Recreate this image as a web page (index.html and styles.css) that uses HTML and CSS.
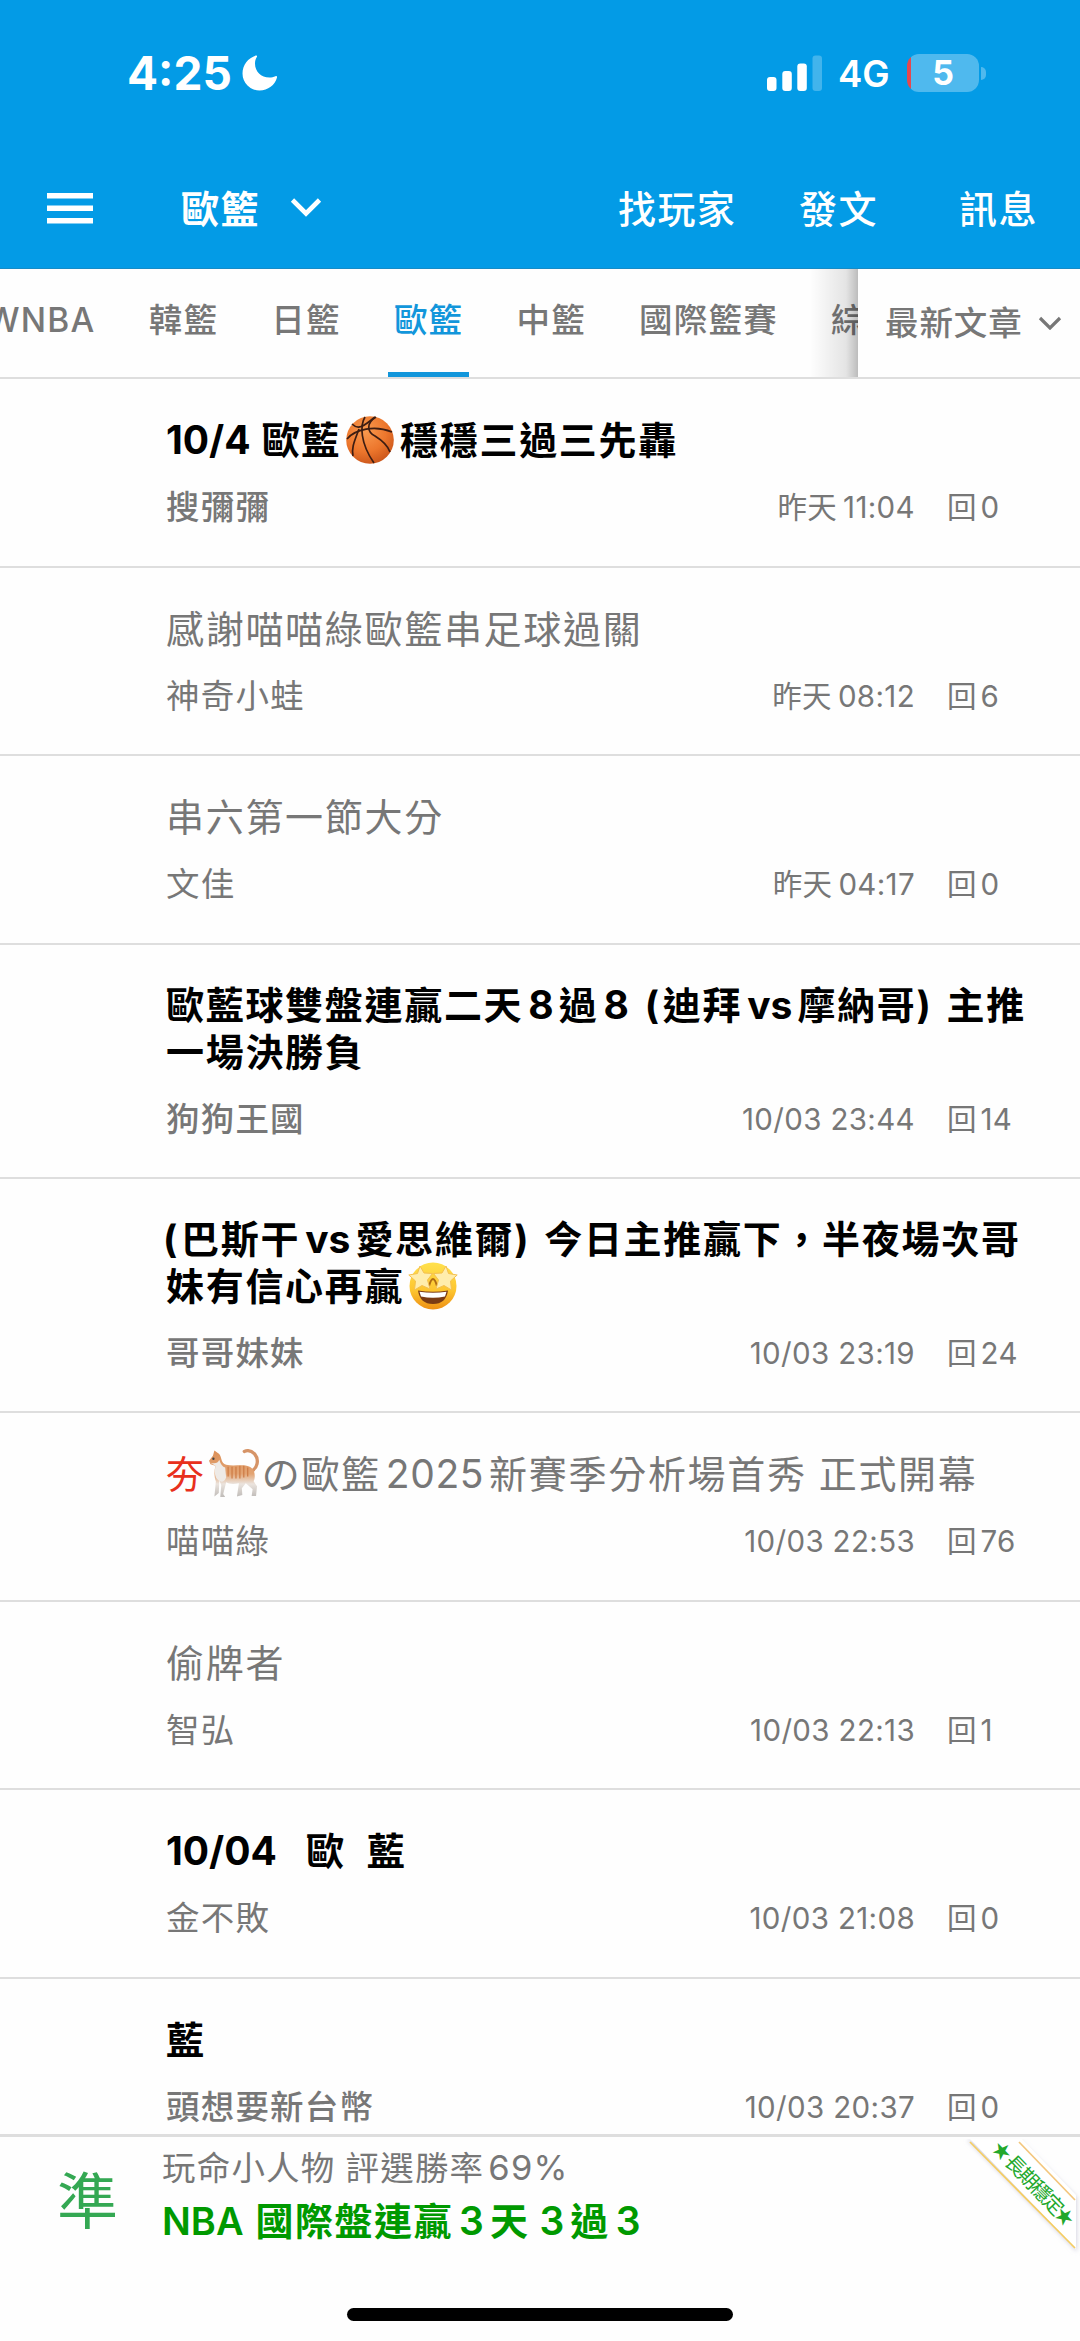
FILE: index.html
```html
<!DOCTYPE html>
<html lang="zh-Hant">
<head>
<meta charset="utf-8">
<title>歐籃</title>
<link rel="stylesheet" href="styles.css">
</head>
<body>
<div class="app">
  <header class="header">
    <div class="status">
      <span class="clock">4:25</span>
      <svg class="moon" width="36" height="36" viewBox="0 0 36 36"><path d="M14 0.5C6 3 0.5 10 0.5 18.500A17 17 0 0 0 17.500 35.500C26 35.500 33 30 35 22.500C35.300 21.300 34.500 20.800 33.500 21.300C31.500 22.200 29.500 22.500 27.500 22.500C19 22.500 13 16.500 13 8.500C13 6 13.600 4 14.800 2C15.400 1 15 0.200 14 0.500Z" fill="#fff"/></svg>
      <svg class="signal" width="56" height="36" viewBox="0 0 56 36" fill="#fff"><rect x="0" y="22" width="9.500" height="14" rx="3"/><rect x="15.300" y="16" width="9.500" height="20" rx="3"/><rect x="30.300" y="8.500" width="9.500" height="27.500" rx="3"/><rect x="45.500" y="0.500" width="9.500" height="35.500" rx="3" opacity=".25"/></svg>
      <span class="network">4G</span>
      <span class="battery">5</span>
      <span class="nub"></span>
    </div>
    <nav class="bar">
      <svg class="menu" width="46" height="32" viewBox="0 0 46 32" fill="#fff"><path d="M0 1h46v5.500H0zM0 13.500h46V19H0zM0 26h46v5.500H0z"/></svg>
      <span class="board">歐籃</span>
      <svg class="board-arrow" width="32" height="22" viewBox="0 0 32 22" fill="none" stroke="#fff" stroke-width="4.600"><path d="M2.500 3L16 16.500L29.500 3"/></svg>
      <span class="action players">找玩家</span>
      <span class="action compose">發文</span>
      <span class="action inbox">訊息</span>
    </nav>
  </header>
  <div class="tabs-row">
    <div class="tabs">
      <span class="tab">WNBA</span>
      <span class="tab">韓籃</span>
      <span class="tab">日籃</span>
      <span class="tab active">歐籃</span>
      <span class="tab">中籃</span>
      <span class="tab">國際籃賽</span>
      <span class="tab">綜</span>
    </div>
    <div class="sort">
      <span>最新文章</span>
      <svg width="24" height="14" viewBox="0 0 24 14" fill="none" stroke="#777" stroke-width="3.200"><path d="M2 2L12 12L22 2"/></svg>
    </div>
  </div>
  <main class="list">
    <article class="post">
      <h2 class="title bold"><span class="l date">10/4</span>歐藍<svg class="emoji" width="50" height="48" viewBox="0 0 50 48"><defs><radialGradient id="ball" cx=".4" cy=".3" r=".75"><stop offset="0" stop-color="#f99a4f"/><stop offset=".6" stop-color="#ec762c"/><stop offset="1" stop-color="#c9541a"/></radialGradient></defs><circle cx="25" cy="24" r="23.800" fill="url(#ball)"/><g fill="none" stroke="#3d1d12" stroke-width="1.700"><path d="M2 23C10 13 30 9 47 16"/><path d="M20 1C15 9 15 27 29 47"/><path d="M7 8C13 14 18 11 30 1"/><path d="M31 1C21 7 22 16 30 20C38 25 43 30 45 36"/><path d="M14 13C10 24 6 32 8 40"/></g></svg>穩穩三過三先轟</h2>
      <div class="meta"><span class="author medium">搜彌彌</span><span class="time"><span class="day">昨天</span>11:04</span><span class="replies">回<b>0</b></span></div>
    </article>
    <article class="post">
      <h2 class="title">感謝喵喵綠歐籃串足球過關</h2>
      <div class="meta"><span class="author">神奇小蛙</span><span class="time"><span class="day">昨天</span>08:12</span><span class="replies">回<b>6</b></span></div>
    </article>
    <article class="post">
      <h2 class="title">串六第一節大分</h2>
      <div class="meta"><span class="author">文佳</span><span class="time"><span class="day">昨天</span>04:17</span><span class="replies">回<b>0</b></span></div>
    </article>
    <article class="post tall">
      <h2 class="title bold">歐藍球雙盤連贏二天<span class="l">8</span>過<span class="l">8</span><span class="open">(</span>迪拜<span class="l">vs</span>摩納哥<span class="close">)</span>主推<br>一場決勝負</h2>
      <div class="meta"><span class="author medium">狗狗王國</span><span class="time">10/03 23:44</span><span class="replies">回<b>14</b></span></div>
    </article>
    <article class="post tall">
      <h2 class="title bold"><span class="open first">(</span>巴斯干<span class="l">vs</span>愛思維爾<span class="close">)</span>今日主推贏下，半夜場次哥<br>妹有信心再贏<svg class="emoji face" width="50" height="48" viewBox="0 0 50 48"><defs><linearGradient id="skin" x1="0" y1="0" x2="0" y2="1"><stop offset="0" stop-color="#ffe14d"/><stop offset=".6" stop-color="#fdc52f"/><stop offset="1" stop-color="#ed8f14"/></linearGradient></defs><circle cx="25" cy="24" r="23.500" fill="url(#skin)"/><path d="M10 28.500Q25 31 40 28.500Q38 42 25 42Q12 42 10 28.500Z" fill="#7a3b14"/><path d="M11.500 29.700Q25 32 38.500 29.700L37 34.500Q25 37 13 34.500Z" fill="#fff"/><path d="M21 24Q23 17 25 17Q27 17 29 24" fill="none" stroke="#b06c14" stroke-width="2"/><g fill="#ffedac" stroke="#f4c04f" stroke-width="1" stroke-linejoin="round"><path d="M12 4L16 11L24.500 11.500L19.500 18L22 27L14 23.500L6.500 28L7.500 19L0.800 13L9.500 11.500Z"/><path d="M38 4L34 11L25.500 11.500L30.500 18L28 27L36 23.500L43.500 28L42.500 19L49.200 13L40.500 11.500Z"/></g></svg></h2>
      <div class="meta"><span class="author medium">哥哥妹妹</span><span class="time">10/03 23:19</span><span class="replies">回<b>24</b></span></div>
    </article>
    <article class="post">
      <h2 class="title"><span class="red">夯</span><svg class="emoji cat" width="52" height="50" viewBox="0 0 52 50"><defs><linearGradient id="fur" x1="0" y1="0" x2="0" y2="1"><stop offset="0" stop-color="#dc9058"/><stop offset=".5" stop-color="#e3a473"/><stop offset=".72" stop-color="#ebe4de"/><stop offset="1" stop-color="#bfbbb8"/></linearGradient></defs><path d="M43 23C50 20 52 11 47 5C44 2 40 1 36.500 2.500" fill="none" stroke="#d69467" stroke-width="3.400" stroke-linecap="round"/><path d="M4.500 7L6 1.500L9.500 4Q12 5 13 10Q14 15 18 16C26 18 35 15 42 18C48 21 48 29 46 33L49.500 38L48.500 48H44L45 41L38 35L34 40L34.500 47L29 48.500L31 35C26 36 21 36 18 34L15 46L17 49H12L13 37L11 32L10.500 45L6 48.500L7.500 33C5.500 28 6 22 7 17L2 15.500L0.500 12Z" fill="url(#fur)"/><g stroke="#cc7943" stroke-width="1.200" fill="none"><path d="M20 18V28M24 18V30M28 18V30M32 17V30M36 17V29M40 19V28"/></g><path d="M2 14Q9 16 11 11Q13 18 17 19L18 29Q15 36 10 32Q5 28 7 17Z" fill="#eeeae6"/><circle cx="5" cy="10" r="1.200" fill="#444"/></svg>の歐籃<span class="l year">2025</span>新賽季分析場首秀<span class="gap"></span>正式開幕</h2>
      <div class="meta"><span class="author">喵喵綠</span><span class="time">10/03 22:53</span><span class="replies">回<b>76</b></span></div>
    </article>
    <article class="post">
      <h2 class="title">偷牌者</h2>
      <div class="meta"><span class="author">智弘</span><span class="time">10/03 22:13</span><span class="replies">回<b>1</b></span></div>
    </article>
    <article class="post">
      <h2 class="title bold"><span class="l date wide">10/04</span>歐<span class="gap mid"></span>藍</h2>
      <div class="meta"><span class="author">金不敗</span><span class="time">10/03 21:08</span><span class="replies">回<b>0</b></span></div>
    </article>
    <article class="post">
      <h2 class="title bold">藍</h2>
      <div class="meta"><span class="author medium">頭想要新台幣</span><span class="time">10/03 20:37</span><span class="replies">回<b>0</b></span></div>
    </article>
  </main>
  <footer class="promo">
    <div class="mark">準</div>
    <div class="promo-text">
      <p class="promo-top">玩命小人物<span class="gap small"></span>評選勝率<span class="pct">69%</span></p>
      <p class="promo-main"><span class="nba">NBA</span>國際盤連贏<span class="l">3</span>天<span class="gap small"></span><span class="l flush">3</span>過<span class="l">3</span></p>
    </div>
    <svg class="ribbon" width="120" height="130" viewBox="0 0 120 130"><defs><filter id="soft" x="-10%" y="-10%" width="120%" height="120%"><feGaussianBlur stdDeviation="2"/></filter></defs><path d="M7 7H60L117 64V119Z" fill="#d6d6e2" filter="url(#soft)"/><path d="M9 5H61L116 62V116Z" fill="#fff"/><g fill="none" stroke-width="1.700"><path d="M10 9L115 115" stroke="#f5cd62"/><path d="M59 9L115 67" stroke="#f3c67c"/></g><g class="ribbon-text"><text transform="translate(41.500 18.500) rotate(46)" x="0" y="7" text-anchor="middle">★</text><text transform="translate(74.500 52) rotate(46)" x="0" y="7" text-anchor="middle" textLength="75">長期穩定</text><text transform="translate(104 84) rotate(46)" x="0" y="7" text-anchor="middle">★</text></g></svg>
    <div class="home"></div>
  </footer>
</div>
</body>
</html>
```
FILE: styles.css
```css
* { box-sizing: border-box; margin: 0; padding: 0; }
body { font-family: Inter, "Noto Sans CJK TC", sans-serif; background: #fefefe; color: #777; text-autospace: no-autospace; text-spacing-trim: space-all; }
svg { display: block; flex: none; }
.app { width: 1080px; height: 2341px; display: flex; flex-direction: column; overflow: hidden; }
.header { height: 268.500px; flex: none; background: #039be6; color: #fff; border-bottom: 1px solid #168bc6; }
.status { height: 146px; display: flex; align-items: center; padding-left: 127px; }
.clock { width: 115px; font-size: 46px; font-weight: 700; white-space: nowrap; }
.moon { margin-right: 489px; }
.signal { margin-right: 15px; }
.network { width: 69px; font-size: 36.500px; font-weight: 600; padding-top: 2px; }
.battery { width: 72px; height: 38px; border-radius: 12px; background: linear-gradient(90deg, #e5484f 4px, #4fb9ee 4px); font-size: 34px; font-weight: 700; line-height: 38px; text-align: center; }
.nub { width: 5px; height: 13px; margin-left: 2px; border-radius: 0 5px 5px 0; background: #4fb9ee; }
.bar { height: 122px; display: flex; align-items: center; padding: 4px 0 0 47px; font-size: 38px; line-height: 48px; font-weight: 500; letter-spacing: 1.400px; }
.menu { margin-top: -3px; }
.board { width: 109px; margin-left: 88px; font-weight: 700; }
.board-arrow { margin-right: 296px; margin-top: -2px; }
.action { white-space: nowrap; }
.players { width: 181px; }
.compose { width: 160px; }
.tabs-row { height: 110.500px; flex: none; display: flex; background: #fefefe; border-bottom: 2px solid #dedede; font-size: 33.500px; font-weight: 500; }
.tabs { width: 858px; display: flex; overflow: hidden; position: relative; padding-left: 386px; }
.tabs::after { content: ""; position: absolute; right: 0; top: 0; width: 48px; height: 110px; background: linear-gradient(90deg, rgba(0,0,0,0), rgba(0,0,0,.1) 75%, rgba(0,0,0,.26)); }
.tab { height: 109px; line-height: 103px; letter-spacing: 1.200px; white-space: nowrap; padding: 0 6px; margin-right: 41.200px; border-bottom: 6px solid transparent; }
.tab:first-child { margin-left: -406px; }
.tab.active { color: #1296db; border-color: #1296db; }
.sort { flex: 1; display: flex; align-items: center; gap: 14px; padding-left: 27px; letter-spacing: .900px; line-height: 48px; }
.sort span { width: 139px; white-space: nowrap; }
.list { flex: 1; overflow: hidden; min-height: 0; }
.post { height: 188.500px; padding: 38px 0 0 166px; border-bottom: 2px solid #dedede; }
.post.tall { height: 234.400px; padding-top: 37px; }
.title { font-size: 38px; line-height: 47px; font-weight: 400; letter-spacing: 1.700px; white-space: nowrap; color: #777; }
.title.bold { font-weight: 700; color: #000; }
.l { margin: 0 5px; letter-spacing: 0; font-size: 39px; line-height: 40px; }
.date { margin: 0 11px 0 0; }
.date.wide { margin-right: 29px; }
.open { margin: 0 2px 0 11px; }
.open.first { margin-left: -3px; }
.close { margin-right: 14px; }
.gap { display: inline-block; width: 12px; }
.gap.mid { width: 21px; }
.gap.small { width: 10px; }
.red { color: #e8301c; }
.emoji { display: inline-block; height: 48px; vertical-align: top; margin: -1px 5px -1px 4px; }
.emoji.cat { margin: -2px 2px 0 2px; height: 49px; }
.year { letter-spacing: .600px; }
.meta { display: flex; align-items: center; height: 40px; margin-top: 23px; font-size: 29.500px; line-height: 40px; }
.author { width: 400px; font-size: 33.500px; letter-spacing: 1.200px; }
.medium { font-weight: 500; }
.time { width: 349px; text-align: right; white-space: nowrap; letter-spacing: .350px; }
.day { margin-right: 6px; }
.replies { margin-left: 32px; white-space: nowrap; }
.replies b { font-weight: 400; margin-left: 4px; letter-spacing: .350px; }
.promo { height: 207px; flex: none; position: relative; display: flex; background: #fefefe; border-top: 3px solid #dedede; }
.mark { width: 162px; padding: 29px 0 0 57px; font-size: 61px; line-height: 72px; font-weight: 400; color: #34a853; }
.promo-text { white-space: nowrap; }
.promo-top { margin-top: 8px; font-size: 33.500px; line-height: 46px; letter-spacing: 1.200px; }
.promo-main { margin-top: 7px; font-size: 38px; line-height: 46px; letter-spacing: 1.500px; font-weight: 600; color: #090; }
.promo-main .l { margin: 0 6px; }
.promo-main .flush { margin-left: 0; }
.pct { margin-left: 4px; font-size: 34.500px; line-height: 40px; }
.nba { margin-right: 12px; letter-spacing: 0; }
.ribbon { position: absolute; left: 960px; top: -4px; clip-path: inset(6px 0 0 0); }
.ribbon-text { font-size: 20px; fill: #23a82c; }
.home { position: absolute; left: 347px; top: 171px; width: 386px; height: 13px; border-radius: 7px; background: #000; }
```
